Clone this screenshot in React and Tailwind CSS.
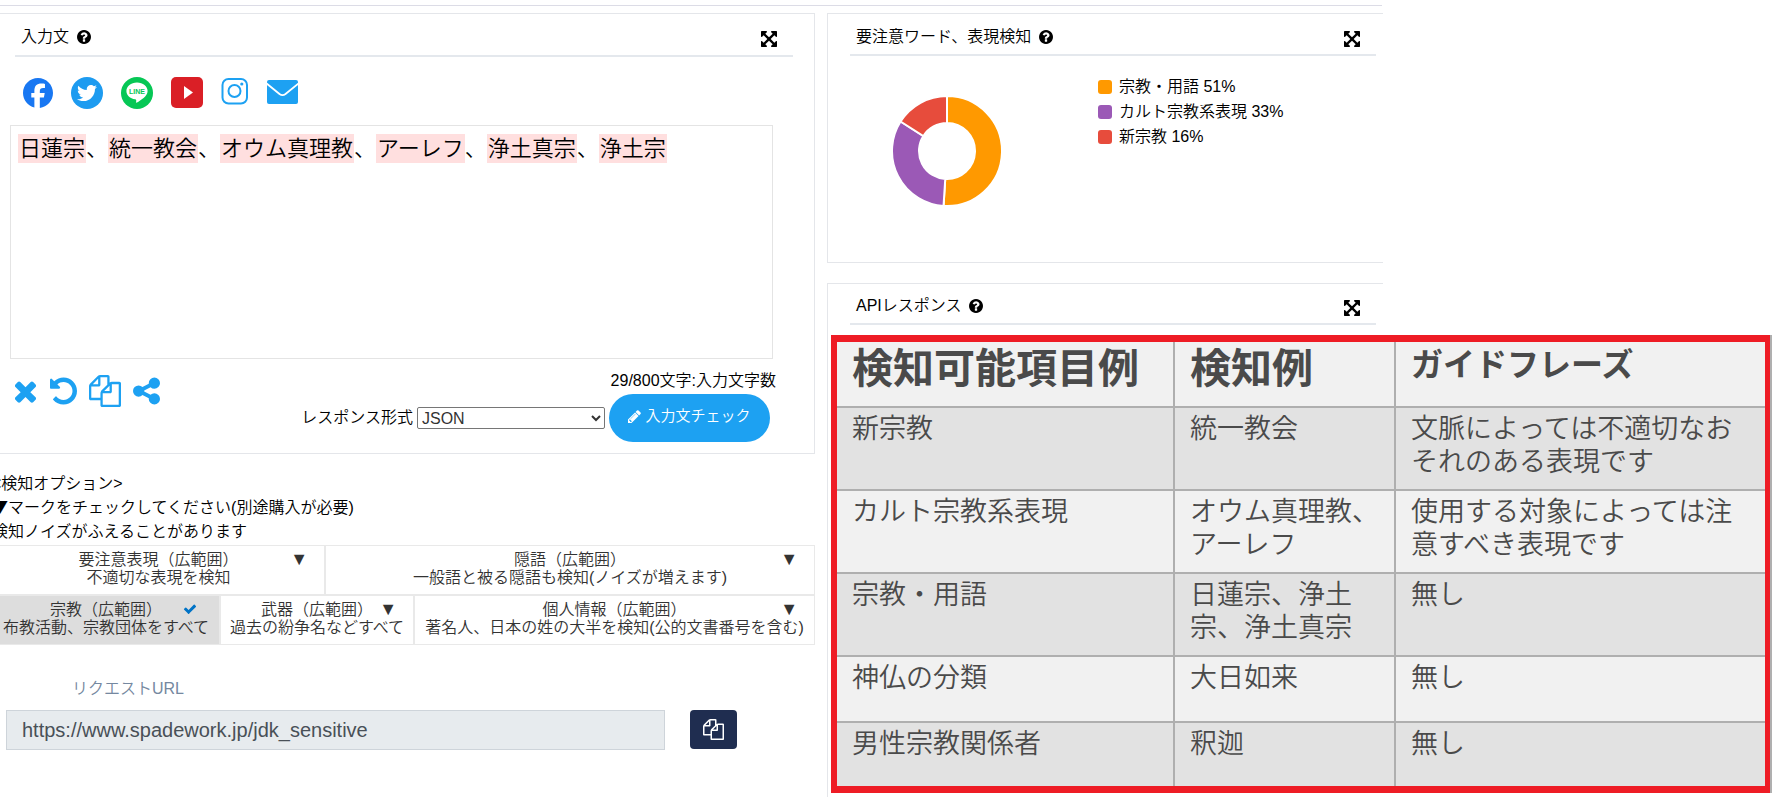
import { useState } from "react"
import { FaFacebook, FaTwitter } from "react-icons/fa6"

const ICONS = {
  times: {
    box: "192 0 1408 1792",
    d: "M1490 1322q0 40-28 68l-136 136q-28 28-68 28t-68-28l-294-294-294 294q-28 28-68 28t-68-28l-136-136q-28-28-28-68t28-68l294-294-294-294q-28-28-28-68t28-68l136-136q28-28 68-28t68 28l294 294 294-294q28-28 68-28t68 28l136 136q28 28 28 68t-28 68l-294 294 294 294q28 28 28 68z",
  },
  undo: {
    box: "128 0 1536 1792",
    d: "M1664 896q0 156-61 298t-164 245-245 164-298 61q-172 0-327-72.5t-264-204.5q-7-10-6.5-22.5t8.5-20.5l137-138q10-9 25-9 16 2 23 12 73 95 179 147t225 52q104 0 198.5-40.5t163.5-109.5 109.5-163.5 40.5-198.5-40.5-198.5-109.5-163.5-163.5-109.5-198.5-40.5q-98 0-188 35.5t-160 101.5l137 138q31 30 14 69-17 40-59 40h-448q-26 0-45-19t-19-45v-448q0-42 40-59 39-17 69 14l130 129q107-101 244.5-156.5t284.5-55.5q156 0 298 61t245 164 164 245 61 298z",
  },
  copy: {
    box: "0 0 1792 1792",
    d: "M1696 384q40 0 68 28t28 68v1216q0 40-28 68t-68 28h-960q-40 0-68-28t-28-68v-288h-544q-40 0-68-28t-28-68v-672q0-40 20-88t48-76l408-408q28-28 76-48t88-20h416q40 0 68 28t28 68v328q68-40 128-40h416zm-544 213l-299 299h299v-299zm-640-384l-299 299h299v-299zm196 647l316-316v-416h-384v416q0 40-28 68t-68 28h-416v640h512v-256q0-40 20-88t48-76zm956 804v-1152h-384v416q0 40-28 68t-68 28h-416v640h896z",
  },
  share: {
    box: "128 0 1536 1792",
    d: "M1344 1024q133 0 226.5 93.5t93.5 226.5-93.5 226.5-226.5 93.5-226.5-93.5-93.5-226.5q0-12 2-34l-360-180q-92 86-218 86-133 0-226.5-93.5t-93.5-226.5 93.5-226.5 226.5-93.5q126 0 218 86l360-180q-2-22-2-34 0-133 93.5-226.5t226.5-93.5 226.5 93.5 93.5 226.5-93.5 226.5-226.5 93.5q-126 0-218-86l-360 180q2 22 2 34t-2 34l360 180q92-86 218-86z",
  },
  expand: {
    box: "128 128 1536 1536",
    d: "M1411 541l-355 355 355 355 144-144q29-31 70-14 39 17 39 59v448q0 26-19 45t-45 19h-448q-42 0-59-40-17-39 14-69l144-144-355-355-355 355 144 144q31 30 14 69-17 40-59 40h-448q-26 0-45-19t-19-45v-448q0-42 40-59 39-17 69 14l144 144 355-355-355-355-144 144q-19 19-45 19-12 0-24-5-40-17-40-59v-448q0-26 19-45t45-19h448q42 0 59 40 17 39-14 69l-144 144 355 355 355-355-144-144q-31-30-14-69 17-40 59-40h448q26 0 45 19t19 45v448q0 42-39 59-13 5-25 5-26 0-45-19z",
  },
  help: {
    box: "128 128 1536 1536",
    d: "M1024 1376v-192q0-14-9-23t-23-9h-192q-14 0-23 9t-9 23v192q0 14 9 23t23 9h192q14 0 23-9t9-23zm256-672q0-88-55.5-163t-138.5-116-170-41q-243 0-371 213-15 24 8 42l132 100q7 6 19 6 16 0 25-12 53-68 86-92 34-24 86-24 48 0 85.5 26t37.5 59q0 38-20 61t-68 45q-63 28-115.5 86.5t-52.5 125.5v36q0 14 9 23t23 9h192q14 0 23-9t9-23q0-19 21.5-49.5t54.5-49.5q32-18 49-28.5t46-35 44.5-48 28-60.5 12.5-81zm384 192q0 209-103 385.5t-279.5 279.5-385.5 103-385.5-103-279.5-279.5-103-385.5 103-385.5 279.5-279.5 385.5-103 385.5 103 279.5 279.5 103 385.5z",
  },
  pencil: {
    box: "128 128 1536 1536",
    d: "M491 1536l91-91-235-235-91 91v107h128v128h107zm523-928q0-22-22-22-10 0-17 7l-542 542q-7 7-7 17 0 22 22 22 10 0 17-7l542-542q7-7 7-17zm-54-192l416 416-832 832h-416v-416zm683 96q0 53-37 90l-166 166-416-416 166-165q36-38 90-38 53 0 91 38l235 234q37 39 37 91z",
  },
  check: {
    box: "0 0 1792 1792",
    d: "M1671 566q0 40-28 68l-724 724-136 136q-28 28-68 28t-68-28l-136-136-362-362q-28-28-28-68t28-68l136-136q28-28 68-28t68 28l294 295 656-657q28-28 68-28t68 28l136 136q28 28 28 68z",
  },
}

const WORDS = ["日蓮宗", "統一教会", "オウム真理教", "アーレフ", "浄土真宗", "浄土宗"]

const SLICES = [
  { label: "宗教・用語", value: 51, color: "#ff9900" },
  { label: "カルト宗教系表現", value: 33, color: "#9b59b6" },
  { label: "新宗教", value: 16, color: "#e74c3c" },
]

const WIDE_OPTIONS = [
  { id: "caution", title: "要注意表現（広範囲）", note: "不適切な表現を検知" },
  { id: "slang", title: "隠語（広範囲）", note: "一般語と被る隠語も検知(ノイズが増えます)" },
]

const NARROW_OPTIONS = [
  { id: "religion", title: "宗教（広範囲）", note: "布教活動、宗教団体をすべて" },
  { id: "weapon", title: "武器（広範囲）", note: "過去の紛争名などすべて" },
  { id: "personal", title: "個人情報（広範囲）", note: "著名人、日本の姓の大半を検知(公的文書番号を含む)" },
]

const ROWS = [
  ["新宗教", "統一教会", "文脈によっては不適切なおそれのある表現です"],
  ["カルト宗教系表現", "オウム真理教、アーレフ", "使用する対象によっては注意すべき表現です"],
  ["宗教・用語", "日蓮宗、浄土宗、浄土真宗", "無し"],
  ["神仏の分類", "大日如来", "無し"],
  ["男性宗教関係者", "釈迦", "無し"],
]

const ROW_HEIGHTS = ["h-[83px]", "h-[83px]", "h-[83px]", "h-[66px]", "h-[64px]"]

function Icon({ name, className }) {
  return (
    <svg viewBox={ICONS[name].box} fill="currentColor" className={className} aria-hidden="true">
      <path d={ICONS[name].d} />
    </svg>
  )
}

function PanelHeader({ title, className }) {
  return (
    <div className={`flex items-center justify-between border-b-2 border-[#e4e8ed] pt-[5px] pl-[6px] pr-4 ${className}`}>
      <h2 className="flex items-center gap-2 text-[16px] leading-6">
        {title}
        <button aria-label="ヘルプ">
          <Icon name="help" className="size-[14px]" />
        </button>
      </h2>
      <button aria-label="拡大" className="pt-1">
        <Icon name="expand" className="size-4" />
      </button>
    </div>
  )
}

function SocialLinks() {
  return (
    <div className="flex items-center gap-[18px] mt-5 pl-[23px] h-8">
      <a href="#facebook" aria-label="Facebook">
        <FaFacebook className="size-[30px] text-[#1877f2]" />
      </a>
      <a
        href="#twitter"
        aria-label="Twitter"
        className="size-8 rounded-full bg-[#1d9bf0] flex items-center justify-center"
      >
        <FaTwitter className="size-5 text-white" />
      </a>
      <a href="#line" aria-label="LINE">
        <svg viewBox="0 0 32 32" className="size-8">
          <circle cx="16" cy="16" r="16" fill="#06c755" />
          <path
            d="M16 5.500C10 5.500 5.400 9.300 5.400 14c0 4.200 3.600 7.600 8.700 8.300 1.300.2 1.300.8 1 2.700-.1.700.3.900.9.500 3.500-2 10.600-6.300 10.600-11.500C26.600 9.300 22 5.500 16 5.500z"
            fill="#fff"
          />
          <text x="16" y="16.500" textAnchor="middle" fill="#06c755" className="text-[7px] font-bold">
            LINE
          </text>
        </svg>
      </a>
      <a href="#youtube" aria-label="YouTube">
        <svg viewBox="0 0 32 32" className="size-8">
          <rect width="32" height="31" rx="5" fill="#da1f26" />
          <path d="M13 9l9 6.500-9 6.500z" fill="#fff" />
        </svg>
      </a>
      <a href="#instagram" aria-label="Instagram">
        <svg viewBox="0 0 27 32" className="w-[27px] h-8" fill="none" stroke="#1da1f2" strokeWidth="2">
          <rect x="1.500" y="2" width="24.500" height="24.500" rx="6" />
          <circle cx="13.500" cy="14" r="6" />
          <circle cx="20.800" cy="7" r="1.600" fill="#1da1f2" stroke="none" />
        </svg>
      </a>
      <a href="#mail" aria-label="メール">
        <svg viewBox="0 0 32 32" className="size-8">
          <rect x="1" y="3" width="31" height="24" rx="2" fill="#1da1f2" />
          <path d="M0 6l13.500 11q3 2.200 6 0L33 6" fill="none" stroke="#fff" strokeWidth="1.800" />
        </svg>
      </a>
    </div>
  )
}

function Donut() {
  const point = (pct, r) => {
    const a = (pct / 100) * 2 * Math.PI
    return `${55 + r * Math.sin(a)} ${55 - r * Math.cos(a)}`
  }
  let from = 0
  return (
    <svg viewBox="0 0 110 110" className="size-[110px]" role="img" aria-label="検知結果">
      {SLICES.map((s) => {
        const start = from
        const end = from + s.value
        from = end
        const large = s.value > 50 ? 1 : 0
        return (
          <path
            key={s.label}
            d={`M${point(start, 55)}A55 55 0 ${large} 1 ${point(end, 55)}L${point(end, 28)}A28 28 0 ${large} 0 ${point(start, 28)}z`}
            fill={s.color}
            stroke="#fff"
            strokeWidth="2"
          />
        )
      })}
    </svg>
  )
}

function Option({ option, checked, onToggle }) {
  return (
    <label
      className={`relative h-[50px] border border-[#e9e9e9] pt-[5px] text-center text-[16px] leading-[18px] text-[#333] whitespace-nowrap ${
        checked ? "bg-[#ddd]" : "bg-white"
      }`}
    >
      <input type="checkbox" className="sr-only" checked={checked} onChange={() => onToggle(option.id)} />
      {option.title}
      <br />
      {option.note}
      {checked ? (
        <Icon name="check" className="absolute right-[22px] top-[6px] size-[14px] text-[#0073c6]" />
      ) : (
        <span className="absolute right-4 top-1 text-[18px]">▼</span>
      )}
    </label>
  )
}

export default function App() {
  const [selected, setSelected] = useState(["religion"])
  const [format, setFormat] = useState("JSON")

  const toggle = (id) => {
    setSelected(selected.includes(id) ? selected.filter((s) => s !== id) : [...selected, id])
  }

  return (
    <div className="min-h-screen flex flex-col overflow-hidden bg-white text-black font-[350] font-['Liberation_Sans','Noto_Sans_CJK_JP',sans-serif]">
      <div className="mt-[5px] w-[78%] border-t border-[#dcdce6]" />

      <div className="flex-1 mt-[7px] grid grid-cols-[815fr_945fr] gap-x-3">
        <div className="min-w-0">
          <section className="border-y border-r border-[#e4e6ea] pb-[11px]">
            <PanelHeader title="入力文" className="h-[43px] ml-[15px] mr-[21px]" />
            <SocialLinks />

            <div
              role="textbox"
              aria-label="入力文"
              contentEditable
              suppressContentEditableWarning
              className="mt-4 ml-[10px] mr-[41px] h-[234px] border border-[#e4e4e4] px-[7px] pt-[7px] text-[22px] leading-8 outline-none"
            >
              {WORDS.map((w, i) => (
                <span key={w}>
                  <mark className="bg-[#ffdfdf] text-black px-px py-[2px]">{w}</mark>
                  {i < WORDS.length - 1 && "、"}
                </span>
              ))}
            </div>

            <div className="flex justify-between items-start mt-[10px] pl-[13px] pr-[38px]">
              <div className="flex gap-3 pt-[6px] text-[#1da1f2]">
                <button aria-label="クリア">
                  <Icon name="times" className="h-8 w-[25px]" />
                </button>
                <button aria-label="元に戻す">
                  <Icon name="undo" className="h-8 w-[27px]" />
                </button>
                <button aria-label="コピー">
                  <Icon name="copy" className="size-8" />
                </button>
                <button aria-label="共有">
                  <Icon name="share" className="h-8 w-[27px]" />
                </button>
              </div>

              <div>
                <p className="text-right text-[16px] leading-6 mb-px">29/800文字:入力文字数</p>
                <div className="flex items-center gap-1 pr-[6px]">
                  <label htmlFor="format" className="text-[16px] leading-6">
                    レスポンス形式
                  </label>
                  <select
                    id="format"
                    value={format}
                    onChange={(e) => setFormat(e.target.value)}
                    className="w-[188px] h-[22px] border border-[#767676] rounded-[2px] text-[16px] leading-5 text-[#333]"
                  >
                    <option>JSON</option>
                    <option>XML</option>
                  </select>
                  <button className="h-12 w-[161px] pb-1 rounded-full bg-[#1da1f2] text-white text-[15px] flex items-center justify-center gap-1">
                    <Icon name="pencil" className="size-[13px]" />
                    入力文チェック
                  </button>
                </div>
              </div>
            </div>
          </section>

          <div className="-ml-2 mt-[18px]">
            <p className="text-[16px] leading-6">
              &lt;検知オプション&gt;
              <br />
              <span className="leading-none font-['Noto_Sans_CJK_JP',sans-serif]">▼</span>
              マークをチェックしてください(別途購入が必要)
              <br />
              検知ノイズがふえることがあります
            </p>
            <div className="grid grid-cols-[333fr_490fr] mt-px">
              {WIDE_OPTIONS.map((o) => (
                <Option key={o.id} option={o} checked={selected.includes(o.id)} onToggle={toggle} />
              ))}
            </div>
            <div className="grid grid-cols-[228fr_194fr_401fr]">
              {NARROW_OPTIONS.map((o) => (
                <Option key={o.id} option={o} checked={selected.includes(o.id)} onToggle={toggle} />
              ))}
            </div>
          </div>

          <div className="mt-8 pl-[6px] pr-[78px]">
            <label htmlFor="request-url" className="block pl-[66px] text-[16px] leading-6 text-[#7588a0]">
              リクエストURL
            </label>
            <div className="flex mt-[9px] gap-[25px]">
              <input
                id="request-url"
                readOnly
                value="https://www.spadework.jp/jdk_sensitive"
                className="flex-1 min-w-0 h-10 border border-[#ced4da] bg-[#e7ebee] px-[15px] text-[20px] text-[#495057]"
              />
              <button
                aria-label="URLをコピー"
                className="w-[47px] h-[39px] rounded-[4px] bg-[#1f2d50] text-white flex items-center justify-center"
              >
                <Icon name="copy" className="size-[21px]" />
              </button>
            </div>
          </div>
        </div>

        <div className="min-w-0 flex flex-col">
          <div className="grid grid-cols-[556fr_389fr]">
            <section className="h-[250px] border-y border-l border-[#e4e6ea]">
              <PanelHeader title="要注意ワード、表現検知" className="h-[42px] ml-[22px] mr-[7px]" />
              <div className="flex items-start pl-16">
                <div className="pt-10">
                  <Donut />
                </div>
                <ul className="ml-24 pt-[18px] text-[16px] leading-[25px]">
                  {SLICES.map((s) => (
                    <li key={s.label} className="flex items-center gap-[7px]">
                      <span className="size-[14px] rounded-[3px]" style={{ backgroundColor: s.color }} />
                      {s.label} {s.value}%
                    </li>
                  ))}
                </ul>
              </div>
            </section>
          </div>

          <section className="flex-1 flex flex-col mt-5">
            <div className="grid grid-cols-[556fr_389fr]">
              <div className="border-t border-l border-[#e4e6ea]">
                <PanelHeader title="APIレスポンス" className="h-[41px] ml-[22px] mr-[7px]" />
              </div>
            </div>
            <div className="flex-1 border-l border-[#e4e6ea] pl-[3px] pt-[10px]">
              <div className="border-r-2 border-[#afafaf]">
                <div className="border-y-[7px] border-l-[6px] border-r-[5px] border-[#ee1c25]">
                  <table className="w-full table-fixed text-left text-[27px] leading-[33px] text-[#4a4a4a]">
                    <colgroup>
                      <col className="w-[337px]" />
                      <col className="w-[221px]" />
                      <col />
                    </colgroup>
                    <thead>
                      <tr className="h-[65px] bg-[#f1f1f1] align-top font-bold">
                        <th className="pl-[15px] pt-[2px] text-[41px] leading-[50px] border-r-2 border-[#afafaf]">
                          検知可能項目例
                        </th>
                        <th className="pl-[15px] pt-[2px] text-[41px] leading-[50px] border-r-2 border-[#afafaf]">
                          検知例
                        </th>
                        <th className="pl-[15px] pt-[2px] text-[32px] leading-[42px]">ガイドフレーズ</th>
                      </tr>
                    </thead>
                    <tbody>
                      {ROWS.map(([item, example, guide], i) => (
                        <tr
                          key={item}
                          className={`border-t-2 border-[#afafaf] align-top ${ROW_HEIGHTS[i]} ${
                            i % 2 === 0 ? "bg-[#e2e2e2]" : "bg-[#f1f1f1]"
                          }`}
                        >
                          <td className="pl-[15px] pr-2 pt-[5px] border-r-2 border-[#afafaf]">{item}</td>
                          <td className="pl-[15px] pr-2 pt-[5px] border-r-2 border-[#afafaf]">{example}</td>
                          <td className="pl-[15px] pr-2 pt-[5px]">{guide}</td>
                        </tr>
                      ))}
                    </tbody>
                  </table>
                </div>
              </div>
            </div>
          </section>
        </div>
      </div>
    </div>
  )
}
